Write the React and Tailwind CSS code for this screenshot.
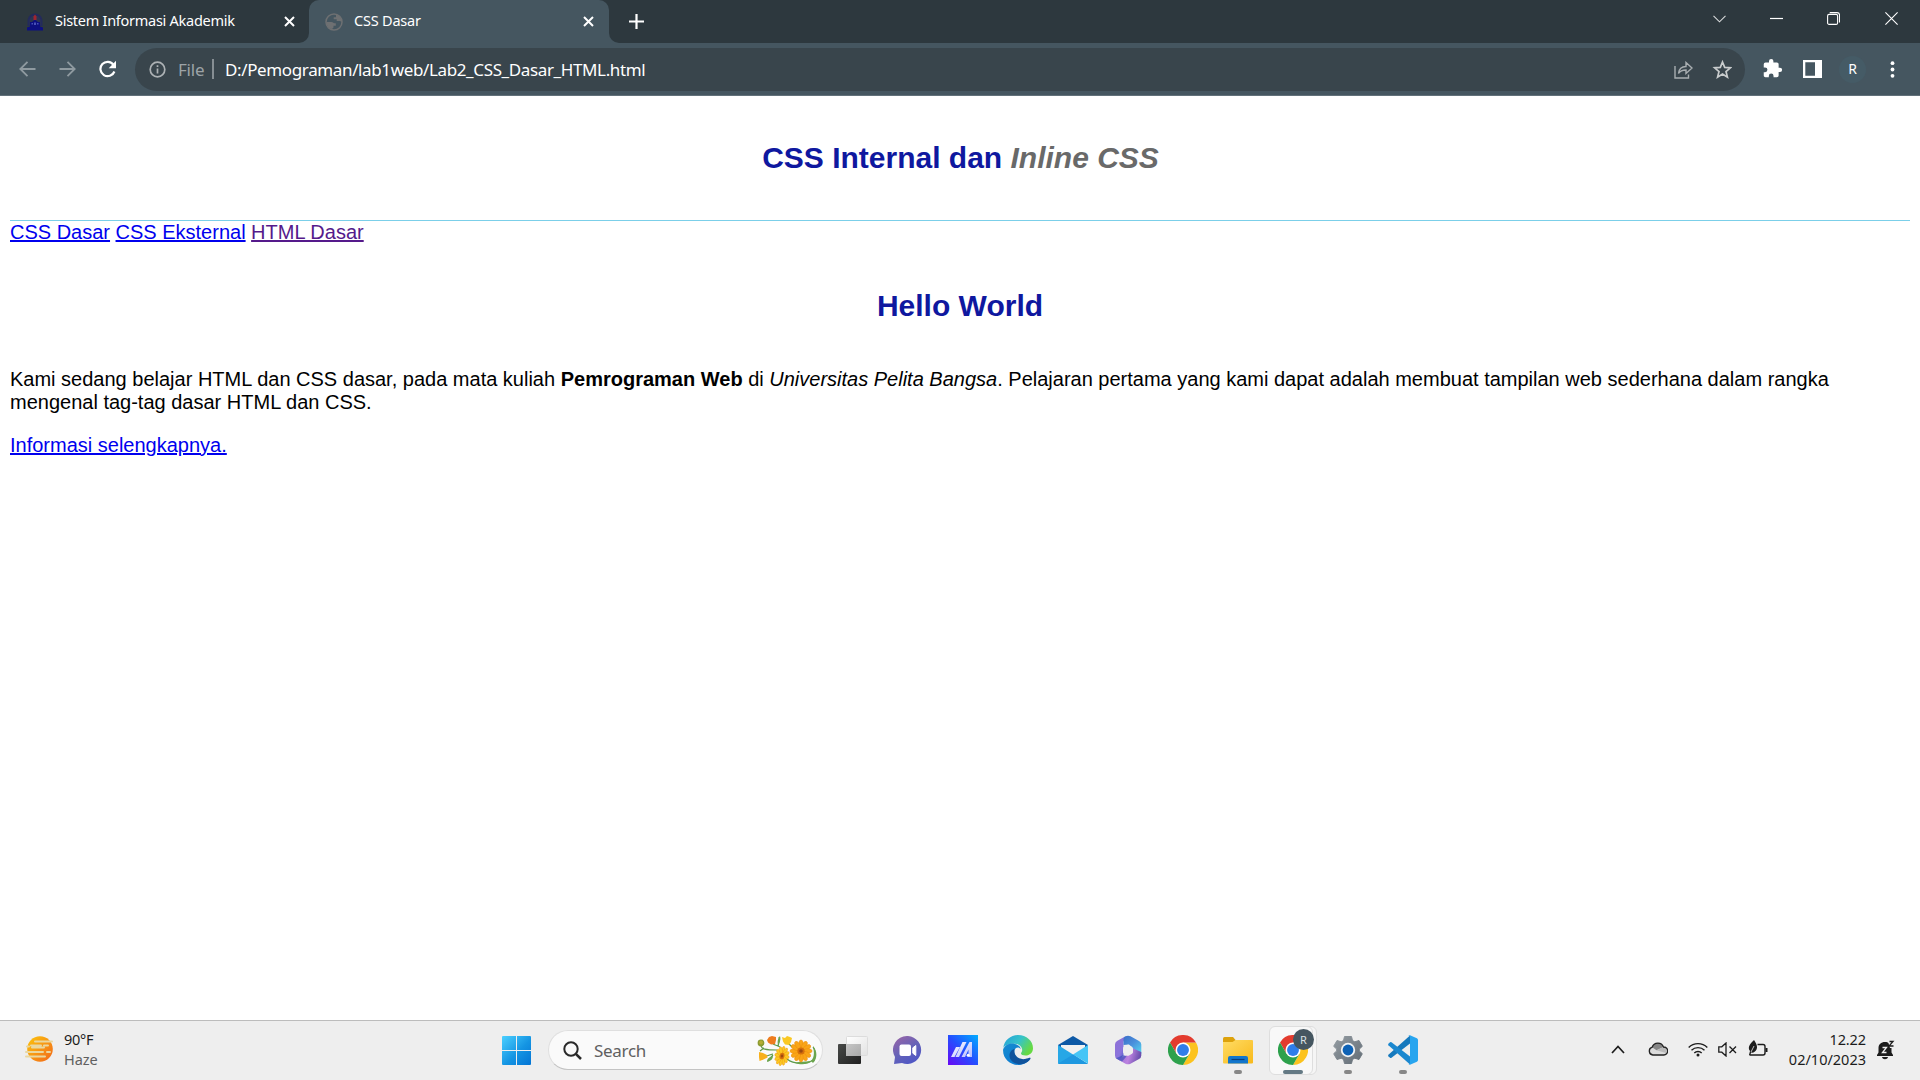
function Crest() {
  return (
    <svg width="16" height="18" viewBox="0 0 16 18">
      <path d="M8 .5C12 .5 15.500 3.500 15.500 8v5H.5V8C.5 3.500 4 .5 8 .5z" fill="#232a5c" />
      <path d="M8 2.500c3 0 5.500 2 5.500 5.500v4h-11V8C2.500 4.500 5 2.500 8 2.500z" fill="#2d3550" />
      <path d="M0 17.500v-3l3-1V9h2l3-2.500L11 9h2v4.500l3 1v3z" fill="#0d0f80" />
      <path d="M6.500 7V3.500L8 1.500l1.500 2V7z" fill="#a02430" />
      <path d="M4.500 10h1.500v1.500H4.500zM10 10h1.500v1.500H10zM7 9.500h2V12H7z" fill="#4950b8" />
    </svg>
  );
}

function Globe() {
  return (
    <svg width="18" height="18" viewBox="0 0 18 18">
      <circle cx="9" cy="9" r="8" fill="none" stroke="#6e7072" strokeWidth="1.500" />
      <path d="M1.500 9h5c1.500 0 1.500 1.200 3 1.200h1.300v2.500H8.500v1.800l-1.500 1.500C3.500 15.500 1.500 12.500 1.500 9zM6.500 1.800h4.500v2.400H8.700v2h3v1.900h3.600l1.200 1.500c.3-4.100-1.500-6.600-4.500-7.800z" fill="#6e7072" />
    </svg>
  );
}

function Close() {
  return (
    <svg width="11" height="11" viewBox="0 0 11 11" stroke="#fff" strokeWidth="2">
      <path d="M1 1l9 9M10 1l-9 9" />
    </svg>
  );
}

function TabStrip() {
  return (
    <div className="flex h-[43px] bg-[#2d383e] text-[14.5px] text-white">
      <div className="w-[309px] bg-[#455660]">
        <div className="flex h-[43px] w-[309px] items-center rounded-br-[10px] bg-[#2d383e] pl-[27px]">
          <Crest />
          <span className="ml-[12px] w-[222px] whitespace-nowrap pb-[4px] leading-[20px] tracking-[-0.27px]">Sistem Informasi Akademik</span>
          <span className="ml-[7px]"><Close /></span>
        </div>
      </div>
      <div className="w-[300px] bg-[#2d383e]">
        <div className="flex h-[43px] items-center rounded-t-[10px] bg-[#455660] pl-[16px]">
          <Globe />
          <span className="ml-[11px] w-[222px] whitespace-nowrap pb-[4px] leading-[20px] tracking-[-0.2px]">CSS Dasar</span>
          <span className="ml-[7px]"><Close /></span>
        </div>
      </div>
      <div className="flex-1 bg-[#455660]">
        <div className="flex h-[43px] items-center rounded-bl-[10px] bg-[#2d383e] pl-[20px]">
          <svg width="15" height="15" viewBox="0 0 15 15" stroke="#fff" strokeWidth="2.200"><path d="M7.500 0v15M0 7.500h15" /></svg>
          <div className="ml-auto flex h-[37px] items-center self-start">
            <svg className="mr-[44px]" width="13" height="8" viewBox="0 0 13 8" fill="none" stroke="#d8dadb" strokeWidth="1.100"><path d="M.5 .8l6 6 6-6" /></svg>
            <svg className="mr-[44px]" width="13" height="13" viewBox="0 0 13 13"><path d="M0 6.500h13" stroke="#fff" strokeWidth="1.200" /></svg>
            <svg className="mr-[45px]" width="13" height="13" viewBox="0 0 13 13" fill="none" stroke="#fff" strokeWidth="1.100"><rect x=".6" y="2.400" width="10" height="10" rx="1.500" /><path d="M2.700 .6h7.300c1.500 0 2.500 1 2.500 2.500v7.300" /></svg>
            <svg className="mr-[22px]" width="13" height="13" viewBox="0 0 13 13" stroke="#fff" strokeWidth="1.100"><path d="M.4 .4l12.200 12.200M12.600 .4L.4 12.600" /></svg>
          </div>
        </div>
      </div>
    </div>
  );
}

function Toolbar() {
  return (
    <div className="flex h-[53px] items-center border-b border-[#62717a] bg-[#455660] pt-[1px]">
      <svg className="mb-[1px] ml-[19px]" width="17" height="16" viewBox="0 0 17 16" fill="none" stroke="#8f9aa0" strokeWidth="1.800"><path d="M16.500 8H1.500M8.500 .8L1.300 8l7.200 7.200" /></svg>
      <svg className="mb-[1px] ml-[23px]" width="17" height="16" viewBox="0 0 17 16" fill="none" stroke="#8f9aa0" strokeWidth="1.800"><path d="M.5 8h15M8.500 .8L15.700 8l-7.200 7.200" /></svg>
      <svg className="mb-[1px] ml-[22px]" width="19" height="18" viewBox="0 0 19 18"><path d="M15.500 4.800A7.200 7.200 0 1 0 16.400 11.500" fill="none" stroke="#fff" strokeWidth="2.200" /><path d="M18 .8V8.200H10.700z" fill="#fff" /></svg>
      <div className="ml-[18px] flex h-[43px] w-[1610px] items-center rounded-full bg-[#39454c]">
        <svg className="ml-[14px]" width="17" height="17" viewBox="0 0 17 17"><circle cx="8.500" cy="8.500" r="7.300" fill="none" stroke="#adb2b5" strokeWidth="1.700" /><path d="M8.500 7.500v5M8.500 4.200v1.900" stroke="#adb2b5" strokeWidth="1.700" /></svg>
        <span className="ml-[12px] w-[34px] whitespace-nowrap text-[17px] leading-[24px] tracking-[-0.2px] text-[#9da3a7]">File</span>
        <span className="mb-[1px] h-[20px] w-[2px] bg-[#868e93]" />
        <span className="ml-[11px] whitespace-nowrap text-[17px] leading-[24px] tracking-[-0.37px] text-white">D:/Pemograman/lab1web/Lab2_CSS_Dasar_HTML.html</span>
        <svg className="ml-auto" width="19" height="18" viewBox="0 0 19 18" fill="none" stroke="#a9aeb1" strokeWidth="1.400"><path d="M1 5v12h13.500v-3.500M4.500 12.500C5 8 8 5.500 12 5.500V1.500L18 7l-6 5.500V9C8.500 9 6 10 4.500 12.500z" /></svg>
        <svg className="mb-[1px] ml-[19px] mr-[13px]" width="20" height="19" viewBox="0 0 20 19" fill="none" stroke="#c9cccd" strokeWidth="1.700"><path d="M10.500 2l2.200 5.400 5.700.4-4.400 3.700 1.400 5.600-4.900-3.100-4.900 3.100 1.400-5.600L2.600 7.800l5.700-.4z" /></svg>
      </div>
      <svg className="mb-[2px] ml-[17px]" width="21" height="21" viewBox="0 0 24 24"><path d="M20.500 11H19V7c0-1.100-.9-2-2-2h-4V3.500a2.500 2.500 0 0 0-5 0V5H4a2 2 0 0 0-2 2v3.800h1.500a2.700 2.700 0 0 1 0 5.400H2V20c0 1.100.9 2 2 2h3.800v-1.500a2.700 2.700 0 0 1 5.400 0V22H17a2 2 0 0 0 2-2v-4h1.500a2.500 2.500 0 0 0 0-5z" fill="#fff" /></svg>
      <svg className="mb-[1px] ml-[20px]" width="19" height="18" viewBox="0 0 19 18"><path fillRule="evenodd" d="M0 0h19v18H0zM2.300 2.300v13.400H12V2.300z" fill="#fff" /></svg>
      <div className="mb-[1px] ml-[17px] flex size-[27px] items-center justify-center rounded-full bg-[#455b66] text-[14px] leading-none text-white">R</div>
      <svg className="mb-[1px] ml-[24px]" width="5" height="17" viewBox="0 0 5 17" fill="#fff"><circle cx="2.500" cy="2.200" r="1.900" /><circle cx="2.500" cy="8.500" r="1.900" /><circle cx="2.500" cy="14.800" r="1.900" /></svg>
    </div>
  );
}

function Page() {
  return (
    <main className="flex-1 px-[10px] font-['Liberation_Sans',Arial,sans-serif] text-[20px] leading-[23px] text-black">
      <div className="h-[125px] border-b border-[#7bcfe9] pt-[44px]">
        <h1 className="pl-[1px] text-center text-[30px] font-bold leading-[35px] text-[#0f189f]">
          CSS Internal dan <i className="text-[#696969]">Inline CSS</i>
        </h1>
      </div>
      <nav className="flex gap-[5.500px] text-[#0000ee]">
        <a className="underline decoration-2 underline-offset-[1px]">CSS Dasar</a>
        <a className="underline decoration-2 underline-offset-[1px]">CSS Eksternal</a>
        <a className="text-[#551a8b] underline decoration-2 underline-offset-[1px]">HTML Dasar</a>
      </nav>
      <h1 className="mt-[44px] text-center text-[30px] font-bold leading-[35px] text-[#0f189f]">Hello World</h1>
      <p className="mt-[45px]">
        Kami sedang belajar HTML dan CSS dasar, pada mata kuliah <b>Pemrograman Web</b> di <i>Universitas Pelita Bangsa</i>. Pelajaran pertama yang kami dapat adalah membuat tampilan web sederhana dalam rangka mengenal tag-tag dasar HTML dan CSS.
      </p>
      <a className="mt-[20px] block w-fit text-[#0000ee] underline decoration-2 underline-offset-[1px]">Informasi selengkapnya.</a>
    </main>
  );
}

function Chrome() {
  return (
    <svg width="30" height="30" viewBox="0 0 48 48">
      <path d="M24 12h20.800A24 24 0 0 1 24 48l10.400-18z" fill="#fcc31e" />
      <path d="M13.600 30L3.200 12A24 24 0 0 1 44.800 12H24z" fill="#e33b2e" />
      <path d="M34.400 30L24 48A24 24 0 0 1 3.200 12l10.400 18z" fill="#2da14c" />
      <circle cx="24" cy="24" r="12" fill="#fff" />
      <circle cx="24" cy="24" r="9.500" fill="#2f7de9" />
    </svg>
  );
}

function Flower({ x, y, s, c = "#f9a516" }) {
  return (
    <g transform={`translate(${x} ${y}) scale(${s})`}>
      {[0, 30, 60, 90, 120, 150, 180, 210, 240, 270, 300, 330].map((a) => (
        <ellipse key={a} cx="0" cy="-6.800" rx="2.200" ry="4.200" fill={c} stroke="#ec8d0c" strokeWidth=".5" transform={`rotate(${a})`} />
      ))}
      <circle r="3.600" fill="#d5700b" />
      <circle r="1.800" fill="#9c4a10" />
    </g>
  );
}

function Bouquet() {
  return (
    <svg width="60" height="32" viewBox="0 0 60 32">
      <g fill="none" stroke="#5f9a4a" strokeWidth="1.200">
        <path d="M4 11c1 3 4 4 16 4M3 16l4-3M8 21c4 0 6-2 8-2M11 26l5-6M21 11c1-4 2-5 1-9M15 8c3 3 5 2 8 4M30 24c7 6 20 5 26 1M32 9l3 3M57 26c2-6 1-12-1-14" />
      </g>
      <path d="M54 26c4-4 3-10 2-15 5 6 4 13 0 17zM21 10c-1-4 0-6 2-9 1 4 0 6-2 9zM10 27c0-4 3-5 6-6 0 3-2 5-6 6zM38 28c4-2 11-1 17-2-4 4-12 4-17 2z" fill="#6ba54e" />
      <circle cx="4" cy="8" r="3.400" fill="#8b9b32" /><circle cx="4" cy="7.500" r="1.900" fill="#b5ad35" />
      <path d="M10 5l2-3 3-1 4 1v3l-1 4-4 .5-3-2z" fill="#ee7c1e" />
      <path d="M25 2l3 1 2-2 3 1 2 1-1 4-2 3-4-.5-2-3z" fill="#fac823" />
      <path d="M2 17l4 1 4 2 .5 2.500-4 2-4 1.500-.5-4z" fill="#f8b01c" />
      <g transform="translate(25 21) rotate(12) scale(.72 .98)"><Flower x={0} y={0} s={0.92} c="#fcc921" /></g>
      <Flower x={44} y={16} s={1} />
    </svg>
  );
}

function TaskView() {
  return (
    <svg width="30" height="30" viewBox="0 0 30 30">
      <defs>
        <linearGradient id="tv1" x2="1" y2="1"><stop stopColor="#484a48" /><stop offset="1" stopColor="#202020" /></linearGradient>
        <linearGradient id="tv2" y2="1"><stop stopColor="#fff" /><stop offset="1" stopColor="#e2e2e2" /></linearGradient>
        <linearGradient id="tv3" y2="1"><stop stopColor="#c6c6c6" /><stop offset="1" stopColor="#a9a9a9" /></linearGradient>
      </defs>
      <rect y="9" width="23" height="20" rx="1" fill="url(#tv1)" />
      <rect x="8.500" y="1.500" width="21" height="19" rx="1" fill="url(#tv2)" stroke="#dcdcdc" />
      <rect x="8" y="9" width="15" height="12" fill="url(#tv3)" />
    </svg>
  );
}

function Chat() {
  return (
    <svg width="30" height="30" viewBox="0 0 30 30">
      <defs><linearGradient id="ch" x1=".2" x2=".8" y2="1"><stop stopColor="#9565a8" /><stop offset=".5" stopColor="#6462b8" /><stop offset="1" stopColor="#4c55c7" /></linearGradient></defs>
      <path d="M15 1a14 14 0 1 1-6 27L1 29l1-7A14 14 0 0 1 15 1z" fill="url(#ch)" />
      <rect x="6.500" y="9.500" width="11.500" height="11.500" rx="2" fill="#fff" />
      <path d="M19.800 12.800l3-2.300v10l-3-2.300z" fill="#fff" stroke="#fff" strokeLinejoin="round" />
    </svg>
  );
}

function MyAsus() {
  return (
    <svg width="30" height="30" viewBox="0 0 30 30">
      <defs>
        <linearGradient id="ma" x1="1" x2="0" y2="1"><stop stopColor="#00adff" /><stop offset=".5" stopColor="#244fff" /><stop offset="1" stopColor="#6907f4" /></linearGradient>
        <linearGradient id="mb" y2="1"><stop stopColor="#fff" /><stop offset="1" stopColor="#b6bcff" /></linearGradient>
      </defs>
      <path d="M0 0h30v30H0z" fill="url(#ma)" />
      <path d="M8 12h4L6.500 22H3zM14.500 7h4L11 22H7.500zM21.500 7H24v15h-3.500v-7.500L17 22h-3.500z" fill="url(#mb)" />
      <circle cx="20.200" cy="20.300" r="1.500" fill="#fff" />
    </svg>
  );
}

function Edge() {
  return (
    <svg width="30" height="30" viewBox="0 0 30 30">
      <defs>
        <linearGradient id="e1" x2="1" y2=".5"><stop stopColor="#249fda" /><stop offset=".55" stopColor="#36c3c9" /><stop offset="1" stopColor="#66da43" /></linearGradient>
        <linearGradient id="e2" y2="1"><stop stopColor="#168bd0" /><stop offset="1" stopColor="#0a76d2" /></linearGradient>
      </defs>
      <path d="M.3 13C1 5.500 7.500 0 15 0c8.500 0 15 6 15 13.200 0 4.300-3.200 7.300-7.500 7.300-3.600 0-5.500-1.300-4-3.200 1.800-2.300.2-7.300-5-8.300C7 8 2 9.700.3 13z" fill="url(#e1)" />
      <path d="M.1 14.500C2 9.500 7.500 7.500 12 9c3.500 1 5.500 3 5.800 5.300-2-3-6.300-1.800-6.500 2.200-.3 6.500 7 10.500 15.500 8C23.500 28.500 19 30 15 30 6.500 30-.5 23 .1 14.500z" fill="url(#e2)" />
      <path d="M11.500 13.700c-1.500 7 4.500 11.300 10.500 10.300 3-.5 4.800-1.500 5.500-1 .6.500-1.500 3.500-5.500 5.300-6 2.500-16-.5-15.500-8.300.1-3 2.500-5.500 5-6.300z" fill="#10539c" />
    </svg>
  );
}

function Mail() {
  return (
    <svg width="30" height="30" viewBox="0 0 30 30">
      <path d="M0 10L15 1l15 9-2 6H2z" fill="#0d59a6" />
      <path d="M3 10h24v4L15 20 3 14z" fill="#f1f1f1" />
      <path d="M0 10l15 9.500L30 29H1a1 1 0 0 1-1-1z" fill="#27a7e6" />
      <path d="M30 10v18.500L15 19.500z" fill="#45c5f6" />
      <path d="M30 29H1a1 1 0 0 1-.7-.4L15 19.500z" fill="#1e98e0" />
    </svg>
  );
}

function Office() {
  return (
    <svg width="30" height="30" viewBox="0 0 30 30">
      <defs>
        <linearGradient id="o1" y2="1"><stop stopColor="#8f6fd6" /><stop offset=".6" stopColor="#8a74dc" /><stop offset="1" stopColor="#3b54c4" /></linearGradient>
        <linearGradient id="o2" x2=".9" y2="1"><stop stopColor="#3c6fc8" /><stop offset=".5" stopColor="#4a90dc" /><stop offset="1" stopColor="#55d3ef" /></linearGradient>
        <linearGradient id="o3" x2="1" y2=".2"><stop stopColor="#8c69d2" /><stop offset=".55" stopColor="#bd83e0" /><stop offset="1" stopColor="#6b4fae" /></linearGradient>
      </defs>
      <path d="M12.500 1.300L4 6Q2 7.200 2 9.500v11Q2 23 4 24l3 1.500L10.500 20V7z" fill="url(#o1)" />
      <path d="M10.500 10V3.500Q11 2 12.500 1.300 15 .2 17.500 1.300L26 6q2.300 1.300 2.300 3.500V19L19 13l-3-3.500z" fill="url(#o2)" />
      <path d="M19 13l9.300 4v3.500q0 2.300-2.300 3.500l-8.500 4.700q-2.500 1.200-5 0L5 24.500l6-3.500 5-1z" fill="url(#o3)" />
      <path d="M3 23.200L10.500 20l3 1.500-4.500 5L4 24z" fill="#3b4fba" fillOpacity=".65" />
      <path d="M15 9.800q1 0 4 2 1 .8 1 2V17q0 1-1 1.800l-3 1.700q-1 .5-2 0l-3-1.700q-1-.8-1-1.800v-3.500q0-1.200 1-1.900l3-1.500z" fill="#eee" />
    </svg>
  );
}

function Folder() {
  return (
    <svg width="30" height="30" viewBox="0 0 30 30">
      <defs><linearGradient id="fo" x2="1" y2="1"><stop stopColor="#ffdc65" /><stop offset="1" stopColor="#f8b91a" /></linearGradient></defs>
      <path d="M0 3.500Q0 2 1.500 2H10l3 3.500L10 9H0z" fill="#dda20c" />
      <path d="M0 7h9.500l3-2H29q1 0 1 1v21.500q0 1-1 1H1q-1 0-1-1z" fill="url(#fo)" />
      <path d="M5 28.500V23q0-2 2-2h16q2 0 2 2v5.500z" fill="#1276cc" />
      <path d="M8.500 24.500h13" stroke="#0a3f7c" strokeWidth="1.200" />
    </svg>
  );
}

function Gear() {
  return (
    <svg width="30" height="30" viewBox="0 0 30 30">
      <defs><linearGradient id="ge" y2="1"><stop stopColor="#949ca2" /><stop offset="1" stopColor="#626c75" /></linearGradient></defs>
      <path d="M11.500 1.500h7l1 4.100 2.300 1.200L26 5.500 29.300 11.300 26.300 14.100v1.800L29.300 18.700 26 24.500l-4.200-1.300-2.300 1.200-1 4.100h-7l-1-4.100-2.300-1.200L4 24.500.7 18.700l3-2.800v-1.800l-3-2.800L4 5.500l4.200 1.300 2.300-1.200z" fill="url(#ge)" stroke="url(#ge)" strokeLinejoin="round" />
      <circle cx="15" cy="15" r="7.200" fill="#f2f4f5" />
      <circle cx="15" cy="15" r="5.400" fill="#0e62b5" />
    </svg>
  );
}

function VsCode() {
  return (
    <svg width="30" height="30" viewBox="0 0 30 30">
      <path d="M22 .5v8L3.500 22.700q-.8.500-1.500 0L.4 21.200q-.6-.7 0-1.400z" fill="#1679bd" />
      <path d="M22 29.500v-8L3.500 7.300q-.8-.5-1.500 0L.4 8.800q-.6.700 0 1.400z" fill="#1a87cf" />
      <path d="M22 .2l6.900 3q1.100.5 1.100 1.700v20.200q0 1.200-1.100 1.700l-6.900 3q-1.200.2-2-.7 1.700 1 2-1V2q-.3-2-2-1 .8-.9 2-.8z" fill="#28a5ef" />
    </svg>
  );
}

function Task({ children, mark }) {
  return (
    <div className="relative flex h-[48px] w-[55px] shrink-0 items-center pl-[12px]">
      {children}
      {mark && <span className="absolute bottom-0 left-[23px] h-[4px] w-[8px] rounded-full bg-[#878787]" />}
    </div>
  );
}

function Taskbar() {
  return (
    <footer className="flex h-[60px] items-center border-t border-[#bcbcbc] bg-[#eeeeee] text-[#1c1c1c]">
      <div className="mb-[3px] flex w-[502px] items-center pl-[24px]">
        <svg width="30" height="28" viewBox="0 0 30 28">
          <defs><linearGradient id="sun" y2="1"><stop stopColor="#fcc60d" /><stop offset="1" stopColor="#f2661a" /></linearGradient></defs>
          <circle cx="16" cy="14" r="12.800" fill="url(#sun)" />
          <path d="M11 6.500h17M7 10.500h10M20 10.500h4M3 11.500h2M8 12.500h12M2 17h17M23 17h3M2 21.500h19" stroke="#ead79f" strokeWidth="2" strokeLinecap="round" />
        </svg>
        <div className="ml-[10px] text-[14.5px] leading-[20px]">
          <div className="tracking-[-0.3px]">90°F</div>
          <div className="tracking-[-0.1px] text-[#606060]">Haze</div>
        </div>
      </div>
      <svg className="shrink-0" width="29" height="29" viewBox="0 0 29 29">
        <defs><linearGradient id="win" x2="1" y2="1"><stop stopColor="#4bd0ff" /><stop offset=".55" stopColor="#1595e3" /><stop offset="1" stopColor="#0374d4" /></linearGradient></defs>
        <path d="M1 0h13v14H0V1q0-1 1-1zM15 0h13q1 0 1 1v13H15zM0 15h14v14H1q-1 0-1-1zM15 15h14v13q0 1-1 1H15z" fill="url(#win)" />
      </svg>
      <div className="mb-[1px] ml-[17px] flex h-[40px] w-[275px] shrink-0 items-center rounded-full border border-b-[#c4c4c4] border-[#dfdfdf] bg-[#fafafa] pl-[14px] pr-[5px]">
        <svg width="19" height="19" viewBox="0 0 19 19" fill="none" stroke="#292929" strokeWidth="2"><circle cx="8" cy="8" r="6.700" /><path d="M12.800 12.800l5.200 5.200" strokeWidth="2.500" /></svg>
        <span className="ml-[12px] mt-[2px] text-[17px] leading-[22px] tracking-[-0.3px] text-[#606060]">Search</span>
        <span className="ml-auto mt-[1px]"><Bouquet /></span>
      </div>
      <div className="mb-[1px] ml-[3px] flex shrink-0">
        <Task><TaskView /></Task>
        <Task><Chat /></Task>
        <Task><MyAsus /></Task>
        <Task><Edge /></Task>
        <Task><Mail /></Task>
        <Task><Office /></Task>
        <Task><Chrome /></Task>
        <Task mark><Folder /></Task>
        <div className="relative flex h-[48px] w-[55px] items-center pl-[12px]">
          <span className="absolute left-[10px] top-0 h-[49px] w-[41px] rounded-[6px] border border-[#dedede] bg-[#f5f5f5]" />
          <span className="absolute left-[3px] top-0 h-[49px] w-[44px] rounded-[6px] border border-[#dedede] bg-[#f8f8f8]" />
          <span className="relative"><Chrome /></span>
          <span className="absolute left-[27px] top-[3px] flex size-[21px] items-center justify-center rounded-full bg-[#455660] text-[11px] leading-none text-[#dce1e4]">R</span>
          <span className="absolute bottom-0 left-[17px] h-[4px] w-[20px] rounded-full bg-[#647984]" />
        </div>
        <Task mark><Gear /></Task>
        <Task mark><VsCode /></Task>
      </div>
      <div className="mb-[2px] ml-auto flex items-center">
        <svg width="14" height="9" viewBox="0 0 14 9" fill="none" stroke="#1c1c1c" strokeWidth="1.700"><path d="M1 8l6-6.500L13 8" /></svg>
        <svg className="mb-[1px] ml-[23px]" width="20" height="14" viewBox="0 0 20 14"><path d="M4.800 13a4 4 0 0 1-.6-7.800A6 6 0 0 1 15.500 5a4 4 0 0 1 .3 8z" fill="#dcdcdc" /><path d="M4.200 5.200A6 6 0 0 1 15.500 5l-7 3.300z" fill="#858585" /><path d="M8.500 8.300l7-3.300a4 4 0 0 1 2.500 6z" fill="#bababa" /><path d="M4.800 13a4 4 0 0 1-.6-7.800A6 6 0 0 1 15.500 5a4 4 0 0 1 .3 8z" fill="none" stroke="#222" strokeWidth="1.300" /></svg>
        <svg className="ml-[20px]" width="20" height="15" viewBox="0 0 20 15" fill="none" stroke="#1c1c1c" strokeWidth="1.400"><path d="M.7 5.500a13 13 0 0 1 18.600 0M3.500 8.300a9.200 9.200 0 0 1 13 0M6.300 11a5.300 5.300 0 0 1 7.400 0" /><circle cx="10" cy="13" r="1.500" fill="#1c1c1c" stroke="none" /></svg>
        <svg className="ml-[10px]" width="19" height="15" viewBox="0 0 19 15" fill="none" stroke="#1c1c1c" strokeWidth="1.300"><path d="M.8 4.800h3L8 1v13L3.800 10.200h-3zM11.500 4.500l6.500 6.500M18 4.500L11.500 11" /></svg>
        <svg className="mb-[2px] ml-[11px]" width="20" height="17" viewBox="0 0 20 17"><path d="M9.500 4.500H15a2 2 0 0 1 2 2V13a2 2 0 0 1-2 2H1.500" fill="none" stroke="#1c1c1c" strokeWidth="1.400" /><path d="M17.500 8h2v4h-2zM6 0c2 3 4 6 2.500 9.500C7.500 12 5 13 3 12.500L2.500 15H1l1-4C-.5 8 1 4.500 6 0z" fill="#1c1c1c" /><path d="M3 12l3-6" stroke="#eee" strokeWidth=".8" /></svg>
        <div className="mb-[2px] ml-[20px] w-[78px] whitespace-nowrap text-right text-[14.5px] leading-[20px]">
          <div className="tracking-[-0.1px]">12.22</div>
          <div>02/10/2023</div>
        </div>
        <svg className="ml-[11px] mr-[25px]" width="18" height="20" viewBox="0 0 18 20"><path d="M8 2c4 0 6.500 2.500 6.500 6v4.500L16 15v1H0v-1l1.500-2.500V8C1.500 4.500 4 2 8 2zM5 17h6c-.5 3-5.500 3-6 0z" fill="#1c1c1c" /><path d="M5.500 7.500h4l-4 5h4" fill="none" stroke="#eee" strokeWidth="1.300" /><path d="M10.500 0H18v8h-5z" fill="#eee" /><path d="M12.500 1.500H16l-4 4.500h4.500" fill="none" stroke="#1c1c1c" strokeWidth="1.300" /></svg>
      </div>
    </footer>
  );
}

export default function App() {
  return (
    <div className="flex h-[1080px] w-[1920px] flex-col overflow-hidden bg-white font-['Noto_Sans','Open_Sans',sans-serif]">
      <TabStrip />
      <Toolbar />
      <Page />
      <Taskbar />
    </div>
  );
}
